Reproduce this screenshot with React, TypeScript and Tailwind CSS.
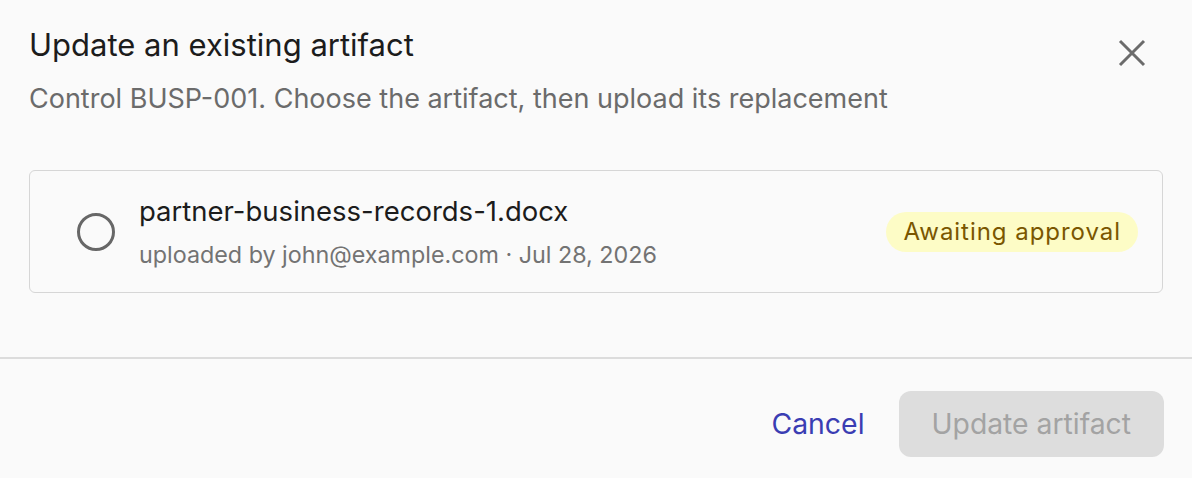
export default function App() {
  return (
    <div
      className="flex h-[478px] w-[1192px] flex-col bg-[#fafafa] text-[#1c1c1c]"
      style={{ fontFamily: "Inter, 'Noto Sans', sans-serif" }}
    >
      <header className="relative pl-[29px] pr-[44px] pt-[25px]">
        <h2 className="text-[31px] leading-[40px] font-normal text-[#1c1c1c]">
          Update an existing artifact
        </h2>
        <p className="mt-[16px] text-[27px] leading-[36px] text-[#6b6b6b]">
          Control BUSP-001. Choose the artifact, then upload its replacement
        </p>
        <button
          type="button"
          aria-label="Close"
          className="absolute right-[46px] top-[39px] text-[#6b6b6b]"
        >
          <svg width="28" height="28" viewBox="0 0 28 28" fill="none">
            <path d="M2 2L26 26M26 2L2 26" stroke="currentColor" strokeWidth="3" />
          </svg>
        </button>
      </header>

      <div className="px-[29px] pt-[53px]">
        <label className="flex h-[123px] items-center rounded-[6px] border border-[#d6d6d6] bg-[#fafafa] pl-[47px] pr-[24px]">
          <span className="h-[38px] w-[38px] shrink-0 rounded-full border-[3px] border-[#676767]" />
          <div className="ml-[24px] flex-1">
            <div className="text-[27.5px] leading-[34px] text-[#1c1c1c]">
              partner-business-records-1.docx
            </div>
            <div className="mt-[12px] text-[23.3px] leading-[30px] text-[#737373]">
              uploaded by john@example.com · Jul 28, 2026
            </div>
          </div>
          <span className="flex h-[40px] items-center rounded-full bg-[#fdfcc6] px-[17px] text-[24px] tracking-[0.04em] text-[#7a5600]">
            Awaiting approval
          </span>
        </label>
      </div>

      <div className="mt-[64px] border-t-2 border-[#dcdcdc]" />

      <footer className="flex items-center justify-end gap-[34px] pr-[28px] pt-[32px]">
        <button type="button" className="text-[28.4px] leading-[36px] text-[#3a3db3]">
          Cancel
        </button>
        <button
          type="button"
          disabled
          className="h-[66px] rounded-[12px] bg-[#dddddd] px-[33px] text-[28.3px] text-[#a3a3a3]"
        >
          Update artifact
        </button>
      </footer>
    </div>
  );
}
